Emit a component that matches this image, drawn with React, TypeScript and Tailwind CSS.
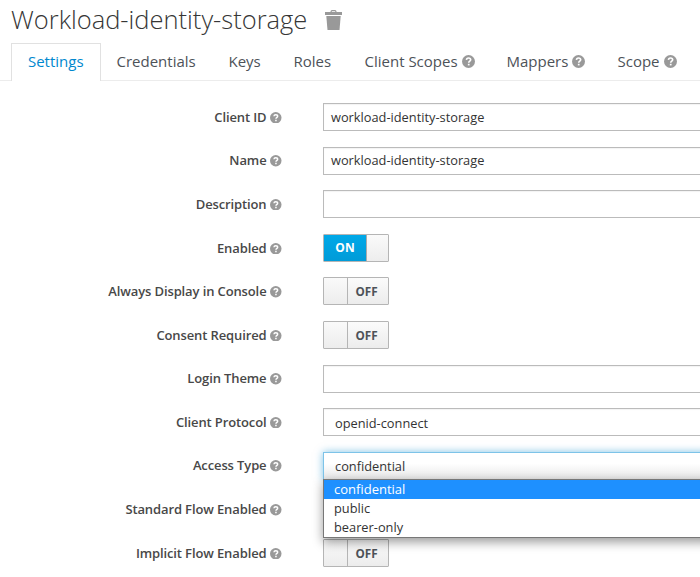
import type { ReactNode } from "react";

function Help({ size = 11 }: { size?: number }) {
  return (
    <svg width={size} height={size} viewBox="0 0 12 12" className="shrink-0">
      <circle cx="6" cy="6" r="6" fill="#999999" />
      <path d="M4.1 4.5C4.2 3.3 5 2.8 6 2.8c1.2 0 2 .7 2 1.6C8 5.6 6.2 5.6 6.2 7.1" fill="none" stroke="white" strokeWidth="1.5" />
      <path d="M5.4 8.1H7v1.5H5.4z" fill="white" />
    </svg>
  );
}

function Tab({ label, help, width }: { label: string; help?: boolean; width: string }) {
  return (
    <li className={`flex h-[38px] shrink-0 items-center gap-[4px] border-b border-[#ececec] whitespace-nowrap text-[#4d5258] ${width}`}>
      {label}
      {help && <Help size={13} />}
    </li>
  );
}

function Row({ label, children }: { label: string; children?: ReactNode }) {
  return (
    <div className="flex h-[43.6px] items-center">
      <div className="flex w-[281.5px] shrink-0 items-center justify-end gap-[3.5px] pt-px text-[13px] font-semibold tracking-[-0.12px] whitespace-nowrap text-[#484848]">
        {label}
        <Help size={11.5} />
      </div>
      <div className="ml-[41.5px] grow">{children}</div>
    </div>
  );
}

function Field({ value = "", select }: { value?: string; select?: boolean }) {
  return (
    <div className={`flex h-[28px] w-[400px] items-center border border-[#bbbbbb] bg-white text-[12.8px] text-[#333333] shadow-[inset_0_1px_1px_rgba(0,0,0,0.05)] ${select ? "pt-[2px] pl-[11px]" : "pt-px pl-[7px]"}`}>
      {value}
    </div>
  );
}

function Toggle({ on }: { on?: boolean }) {
  return (
    <div className="flex h-[28px] w-[66px] overflow-hidden rounded-[1px] border border-[#b5b5b5] text-[12px] font-bold">
      {on ? (
        <>
          <span className="flex w-[42px] items-center justify-center bg-linear-to-b from-[#00a8e8] to-[#009bd8] text-white">ON</span>
          <span className="grow border-l border-[#aaaaaa] bg-linear-to-b from-[#fafafa] to-[#ededed]" />
        </>
      ) : (
        <>
          <span className="w-[24px] border-r border-[#b5b5b5] bg-linear-to-b from-[#fafafa] to-[#ededed]" />
          <span className="flex grow items-center justify-center bg-linear-to-b from-[#fbfbfb] to-[#ececec] pt-px pr-[3px] text-[11.7px] text-[#4d5258]">OFF</span>
        </>
      )}
    </div>
  );
}

export default function App() {
  return (
    <main className="h-[577px] w-[700px] overflow-hidden bg-white font-['Open_Sans','Noto_Sans',sans-serif]">
      <header className="flex h-[43px] items-start pl-[11px]">
        <h1 className="w-[314px] text-[25.5px] leading-[38px] font-light whitespace-nowrap text-[#363636]">Workload-identity-storage</h1>
        <svg className="mt-[10px]" width="17" height="20" viewBox="0 0 17 20" fill="#999999">
          <path d="M0 2h5.5V1.5q0-1.5 1.5-1.5h3q1.5 0 1.5 1.5V2H17v3H0zM6.8 1.2V2h3.4v-.8z" fillRule="evenodd" />
          <path d="M1.3 6h14.4L14.5 20h-12z" />
        </svg>
      </header>
      <ul className="flex text-[15px]">
        <li className="h-[38px] w-[11px] border-b border-[#ececec]" />
        <li className="flex h-[38px] w-[89.5px] shrink-0 items-center justify-center border border-b-0 border-[#e1e1e1] pb-[2px] text-[#0088ce]">Settings</li>
        <li className="flex grow items-end">
          <Tab label="Credentials" width="w-[128px] pl-[16px]" />
          <Tab label="Keys" width="w-[65px]" />
          <Tab label="Roles" width="w-[71px]" />
          <Tab label="Client Scopes" help width="w-[142px]" />
          <Tab label="Mappers" help width="w-[111px]" />
          <Tab label="Scope" help width="w-[82.5px]" />
        </li>
      </ul>
      <form className="pt-[14.2px]">
        <Row label="Client ID"><Field value="workload-identity-storage" /></Row>
        <Row label="Name"><Field value="workload-identity-storage" /></Row>
        <Row label="Description"><Field /></Row>
        <Row label="Enabled"><Toggle on /></Row>
        <Row label="Always Display in Console"><Toggle /></Row>
        <Row label="Consent Required"><Toggle /></Row>
        <Row label="Login Theme"><Field /></Row>
        <Row label="Client Protocol"><Field value="openid-connect" select /></Row>
        <Row label="Access Type">
          <div className="relative">
            <div className="flex h-[28px] w-[400px] items-center border border-[#7dc3e8] bg-linear-to-b from-white from-40% to-[#e8e8e8] pt-px pl-[11px] text-[12.8px] text-[#333333] shadow-[0_0_8px_rgba(0,136,206,0.5)]">confidential</div>
            <div className="absolute top-[27px] left-0 z-10 w-[400px] border border-[#777777] bg-white text-[12.8px] leading-[19px] text-[#333333] shadow-[0_4px_10px_rgba(0,0,0,0.4)]">
              <div className="h-[19.5px] bg-[#1e90ff] pl-[10px] text-[13px] text-white">confidential</div>
              <div className="h-[19px] pl-[10px] leading-[18px]">public</div>
              <div className="h-[19px] pl-[10px] leading-[18px]">bearer-only</div>
            </div>
          </div>
        </Row>
        <Row label="Standard Flow Enabled" />
        <Row label="Implicit Flow Enabled"><Toggle /></Row>
      </form>
    </main>
  );
}
